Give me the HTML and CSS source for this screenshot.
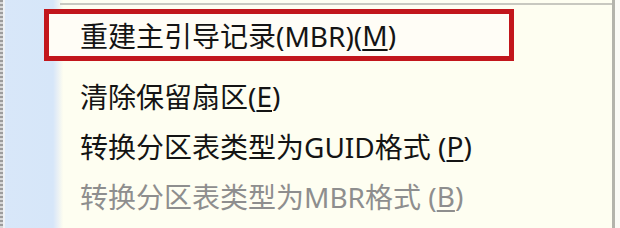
FILE: index.html
```html
<!DOCTYPE html>
<html lang="zh-CN">
<head>
  <meta charset="UTF-8">
  <title>磁盘右键菜单</title>
  <link rel="stylesheet" href="styles.css">
</head>
<body>
  <div class="menu">
    <ul class="list">
      <li class="item marked">重建主引导记录(MBR)(<u>M</u>)</li>
      <li class="item">清除保留扇区(<u>E</u>)</li>
      <li class="item">转换分区表类型为GUID格式 (<u>P</u>)</li>
      <li class="item disabled">转换分区表类型为MBR格式 (<u>B</u>)</li>
    </ul>
  </div>
</body>
</html>
```

FILE: styles.css
```css
body {
  margin: 0;
  background-color: #fbfbf6;
  font-family: 'Noto Sans', 'Noto Sans CJK SC', sans-serif;
}

.menu {
  width: 612px;
  height: 228px;
  border-right: 3px solid #b4b4ac;
  overflow: hidden;
  background:
    linear-gradient(#c8c8c0, #c8c8c0) 60px 3px / 560px 2px no-repeat,
    repeating-linear-gradient(to bottom, #9c9c9c 0, #9c9c9c 2px, #d8d8d8 2px, #d8d8d8 4px) 0 0 / 3px 100% no-repeat,
    linear-gradient(to right, #eef2f6 0, #eef2f6 2px, #d8e7f9 2px, #d6e6f9 50px, #e6eef6 54px, #fdfdf0 60px) 3px 0 / 60px 100% no-repeat,
    #fefef1;
}

.list {
  list-style: none;
  margin: 0;
  padding: 9px 0 0 44px;
}

.item {
  width: 470px;
  height: 50px;
  box-sizing: border-box;
  padding-left: 36px;
  display: flex;
  align-items: center;
  font-size: 28px;
  color: #141414;
  white-space: nowrap;
}

.item u {
  text-underline-offset: 3px;
  text-decoration-thickness: 2px;
}

.marked {
  height: 52px;
  margin-bottom: 10px;
  padding-left: 31px;
  border: 5px solid #c2161c;
  background-color: #fffdf6;
}

.disabled {
  color: #8e8e8e;
}
```
